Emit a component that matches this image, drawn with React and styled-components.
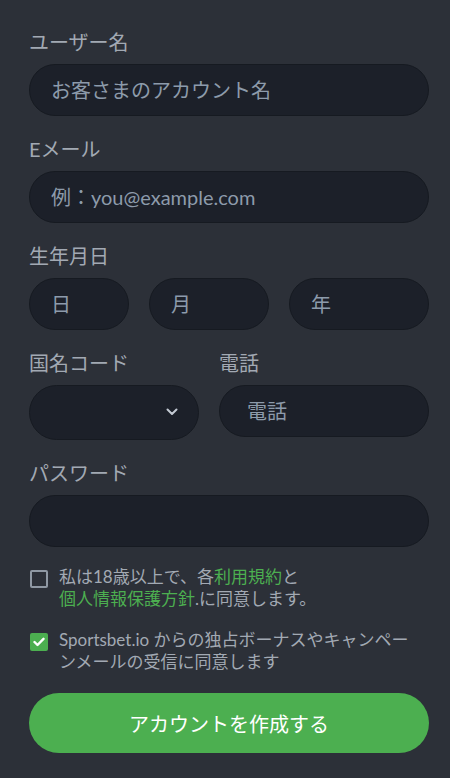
import React, { useState } from "react";
import styled, { createGlobalStyle } from "styled-components";

const GlobalStyle = createGlobalStyle`
	html, body {
		margin: 0;
		padding: 0;
		background: #2c3038;
	}
	body {
		font-family: Lato, "Noto Sans CJK JP", sans-serif;
	}
	* {
		box-sizing: border-box;
	}
`;

function App() {
	const [adult, setAdult] = useState(false);
	const [promo, setPromo] = useState(true);

	return (
		<>
			<GlobalStyle />
			<Form onSubmit={(e) => e.preventDefault()}>
				<Field>
					<Label>ユーザー名</Label>
					<Input placeholder="お客さまのアカウント名" />
				</Field>
				<Field>
					<Label>Eメール</Label>
					<Input placeholder="例：you@example.com" />
				</Field>
				<Field>
					<Label>生年月日</Label>
					<DateRow>
						<Input placeholder="日" />
						<Input placeholder="月" />
						<Input placeholder="年" />
					</DateRow>
				</Field>
				<PhoneRow>
					<Field>
						<Label>国名コード</Label>
						<SelectBox>
							<Chevron viewBox="0 0 12 8">
								<path
									d="M1.5 1.5 L6 6 L10.5 1.5"
									fill="none"
									stroke="#c3cad3"
									strokeWidth="2"
									strokeLinecap="round"
									strokeLinejoin="round"
								/>
							</Chevron>
						</SelectBox>
					</Field>
					<Field>
						<Label>電話</Label>
						<Input placeholder="電話" $pad={27} />
					</Field>
				</PhoneRow>
				<Field>
					<Label>パスワード</Label>
					<Input type="password" />
				</Field>

				<CheckRow onClick={() => setAdult(!adult)}>
					<Box $checked={adult}>{adult && <Tick />}</Box>
					<CheckText>
						私は18歳以上で、各<Link>利用規約</Link>と
						<br />
						<Link>個人情報保護方針</Link>.に同意します。
					</CheckText>
				</CheckRow>
				<CheckRow onClick={() => setPromo(!promo)}>
					<Box $checked={promo}>{promo && <Tick />}</Box>
					<CheckText>
						Sportsbet.io からの独占ボーナスやキャンペーンメールの受信に同意します
					</CheckText>
				</CheckRow>

				<SubmitButton type="submit">アカウントを作成する</SubmitButton>
			</Form>
		</>
	);
}

function Tick() {
	return (
		<svg width="12" height="10" viewBox="0 0 12 10">
			<path
				d="M1.5 5 L4.5 8 L10.5 1.8"
				fill="none"
				stroke="#fff"
				strokeWidth="2.4"
				strokeLinecap="round"
				strokeLinejoin="round"
			/>
		</svg>
	);
}

const Form = styled.form`
	width: 450px;
	min-height: 778px;
	padding: 29px 21px 0 29px;
	display: flex;
	flex-direction: column;
`;

const Field = styled.div`
	display: flex;
	flex-direction: column;
	margin-bottom: 20px;
	min-width: 0;
`;

const Label = styled.label`
	font-size: 20px;
	line-height: 26px;
	color: #a2a9b3;
	margin-bottom: 9px;
`;

const Input = styled.input`
	width: 100%;
	height: 52px;
	border-radius: 26px;
	border: 1px solid #161a21;
	background: #1c2029;
	color: #c9d0d8;
	font-family: inherit;
	font-size: 20px;
	padding: 0 0 0 ${(p) => p.$pad || 21}px;
	outline: none;
	&::placeholder {
		color: #8d9bab;
	}
`;

const DateRow = styled.div`
	display: grid;
	grid-template-columns: 100px 120px 140px;
	column-gap: 20px;
`;

const PhoneRow = styled.div`
	display: grid;
	grid-template-columns: 170px 210px;
	column-gap: 20px;
	align-items: start;
	& > div {
		margin-bottom: 20px;
	}
`;

const SelectBox = styled.div`
	height: 55px;
	border-radius: 28px;
	border: 1px solid #161a21;
	background: #1c2029;
	display: flex;
	align-items: center;
	justify-content: flex-end;
	padding-right: 20px;
`;

const Chevron = styled.svg`
	width: 12px;
	height: 8px;
	margin-top: -1px;
`;

const CheckRow = styled.div`
	display: flex;
	align-items: flex-start;
	gap: 11px;
	margin-bottom: 20px;
	padding-left: 1px;
	cursor: pointer;
`;

const Box = styled.span`
	flex: none;
	width: 18px;
	height: 18px;
	margin-top: 3px;
	border-radius: 2px;
	border: ${(p) => (p.$checked ? "none" : "2px solid #8f98a3")};
	background: ${(p) => (p.$checked ? "#4caf50" : "transparent")};
	display: flex;
	align-items: center;
	justify-content: center;
`;

const CheckText = styled.p`
	margin: -1px 0 0;
	padding-right: 10px;
	font-size: 17px;
	line-height: 22px;
	color: #a2a9b3;
`;

const Link = styled.span`
	color: #4caf50;
`;

const SubmitButton = styled.button`
	width: 400px;
	height: 60px;
	border: none;
	border-radius: 30px;
	background: #4caf50;
	color: #ffffff;
	font-family: inherit;
	font-size: 20px;
	cursor: pointer;
`;

export default App;
